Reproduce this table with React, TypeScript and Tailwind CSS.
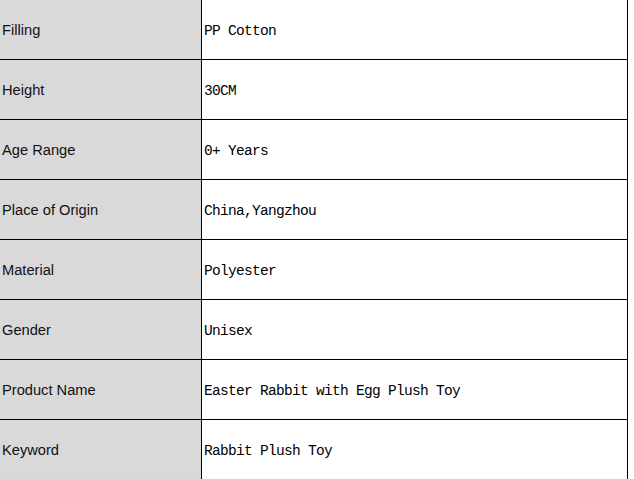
const rows: [string, string][] = [
  ['Filling', 'PP Cotton'],
  ['Height', '30CM'],
  ['Age Range', '0+ Years'],
  ['Place of Origin', 'China,Yangzhou'],
  ['Material', 'Polyester'],
  ['Gender', 'Unisex'],
  ['Product Name', 'Easter Rabbit with Egg Plush Toy'],
  ['Keyword', 'Rabbit Plush Toy'],
]

export default function App() {
  return (
    <div className="h-[479px] w-[634px] overflow-hidden bg-white">
      <div className="w-[628px] border-r border-black">
        {rows.map(([label, value]) => (
          <div key={label} className="flex h-[60px] border-b border-black">
            <div className="flex w-[202px] shrink-0 items-center border-r border-black bg-[#d9d9d9] pl-[2px] font-['Liberation_Sans',Arial,sans-serif] text-[14.67px] text-[#111]">
              {label}
            </div>
            <div className="flex flex-1 items-center pt-[5px] pl-[2px] font-['Liberation_Mono','Courier_New',monospace] text-[14.5px] tracking-[-0.7px] text-black">
              {value}
            </div>
          </div>
        ))}
      </div>
    </div>
  )
}
